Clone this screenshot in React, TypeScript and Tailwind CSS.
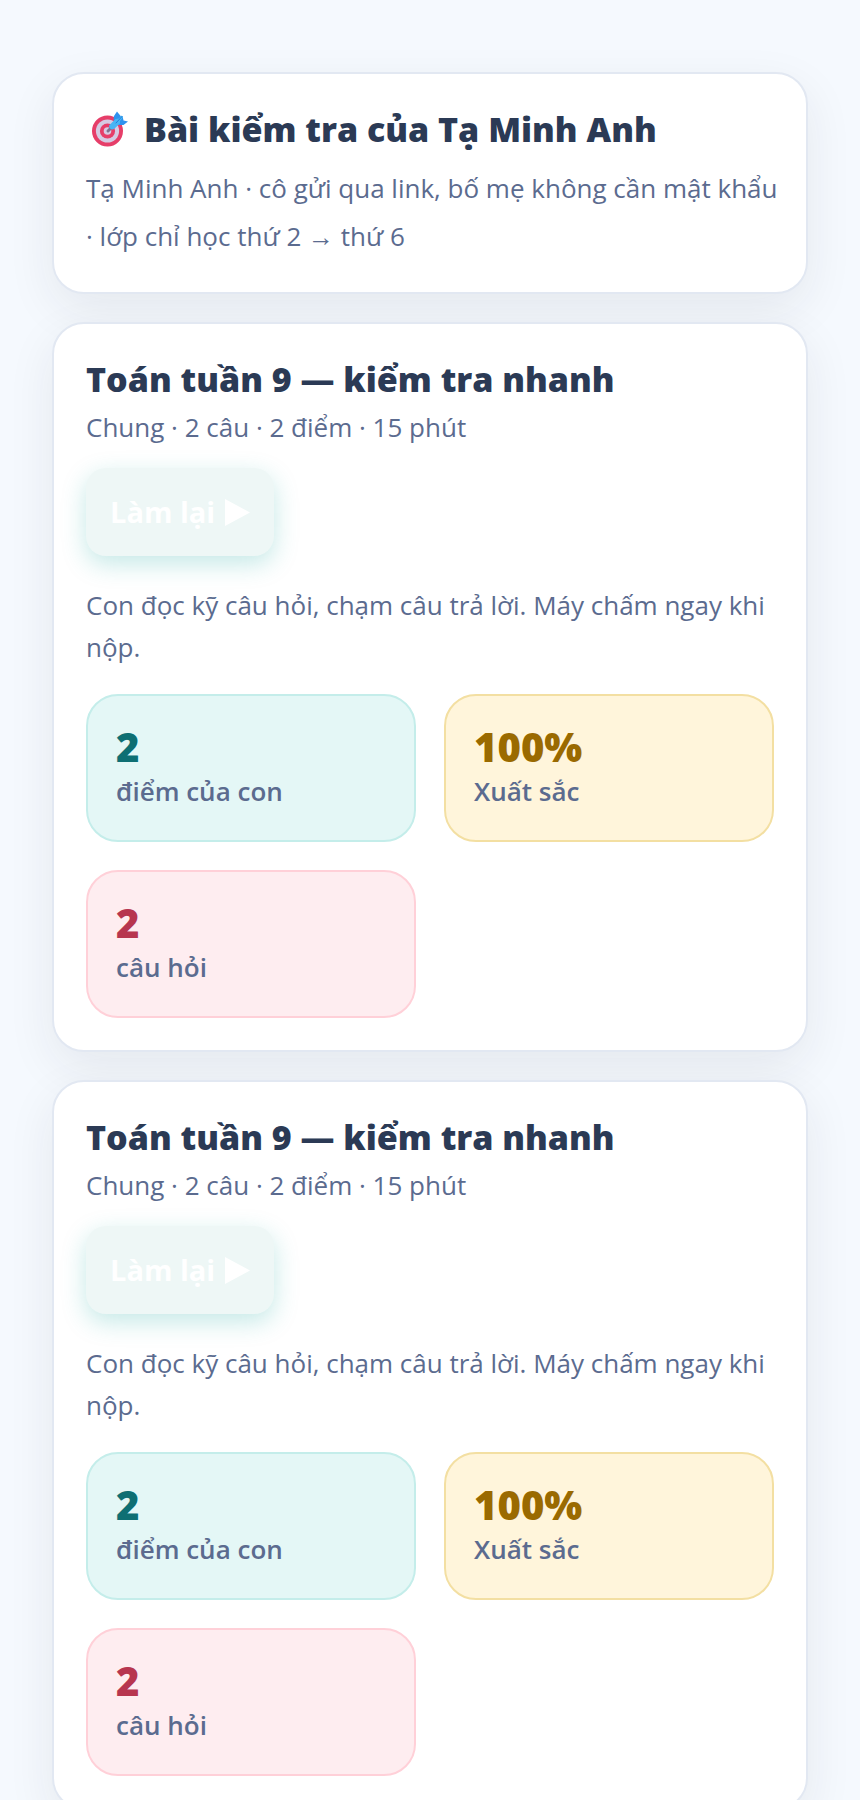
import type { ReactNode } from "react";

type Tone = "teal" | "gold" | "rose";

type Stat = {
  value: string;
  label: string;
  tone: Tone;
};

type Quiz = {
  id: string;
  title: string;
  meta: string;
  hint: string;
  stats: Stat[];
};

const stats: Stat[] = [
  { value: "2", label: "điểm của con", tone: "teal" },
  { value: "100%", label: "Xuất sắc", tone: "gold" },
  { value: "2", label: "câu hỏi", tone: "rose" },
];

const quizzes: Quiz[] = ["quiz-1", "quiz-2"].map((id) => ({
  id,
  title: "Toán tuần 9 — kiểm tra nhanh",
  meta: "Chung · 2 câu · 2 điểm · 15 phút",
  hint: "Con đọc kỹ câu hỏi, chạm câu trả lời. Máy chấm ngay khi nộp.",
  stats,
}));

const tileTones: Record<Tone, string> = {
  teal: "bg-[#e4f7f6] border-[#c4edea]",
  gold: "bg-[#fff5db] border-[#f3dfa2]",
  rose: "bg-[#feedf0] border-[#ffd0d8]",
};

const valueTones: Record<Tone, string> = {
  teal: "text-[#0e6f73]",
  gold: "text-[#9a6a00]",
  rose: "text-[#b7364f]",
};

const TargetIcon = () => (
  <svg viewBox="0 0 36 36" className="size-9 shrink-0" aria-hidden="true">
    <circle cx="15.5" cy="20" r="15.5" fill="#e63e69" />
    <circle cx="15.5" cy="20" r="11.6" fill="#d5cbe3" />
    <circle cx="15.5" cy="20" r="7.6" fill="#e63e69" />
    <circle cx="15.5" cy="20" r="3.8" fill="#d5cbe3" />
    <path d="M16 20 20 16" stroke="#80748f" strokeWidth="3" strokeLinecap="round" />
    <path d="M21.5 9.500 22 5 25 .500 29 5.500 27 11z" fill="#2f92ee" />
    <path d="M26 10 30.500 5 31.500 9.500 36 10.500 31.500 14 25.500 14z" fill="#2f92ee" />
    <path d="M17 14.500 23.500 8 27 7.500 29.500 4.500 31 6.500 28 10 28 12.500 22 18a3.400 3.400 0 0 1-5-3.500z" fill="#48b5f4" />
    <path d="m24 12 6-6.500" stroke="#217fdc" strokeWidth="1" strokeLinecap="round" />
  </svg>
);

const Card = ({ children }: { children: ReactNode }) => (
  <section className="rounded-[32px] border-2 border-[#e2e8f2] bg-white p-8 shadow-[0_16px_48px_rgba(40,44,52,0.08)]">
    {children}
  </section>
);

const StatTile = ({ value, label, tone }: Stat) => (
  <div className={`rounded-[32px] border-2 p-7 ${tileTones[tone]}`}>
    <div className={`text-[40px] leading-[46px] font-extrabold ${valueTones[tone]}`}>{value}</div>
    <div className="text-[26px] leading-[42px] font-semibold">{label}</div>
  </div>
);

const QuizCard = ({ quiz }: { quiz: Quiz }) => (
  <Card>
    <h2 className="text-[34px] leading-[46px] font-extrabold text-[#2b3a55]">{quiz.title}</h2>
    <p className="mt-1 text-[26px] leading-[42px]">{quiz.meta}</p>
    <button
      type="button"
      className="mt-5 flex h-[88px] items-center gap-2.5 rounded-[20px] bg-[#eef7f6] px-6 text-[29px] font-bold text-white shadow-[0_8px_24px_rgba(22,168,160,0.25)]"
    >
      Làm lại
      <svg viewBox="0 0 25 27" className="h-[27px] w-[25px]" aria-hidden="true">
        <path d="M0 0 25 13.500 0 27z" fill="currentColor" />
      </svg>
    </button>
    <p className="mt-7 text-[26px] leading-[42px]">{quiz.hint}</p>
    <div className="mt-[26px] grid grid-cols-2 gap-7">
      {quiz.stats.map((stat) => (
        <StatTile key={stat.label} {...stat} />
      ))}
    </div>
  </Card>
);

const App = () => {
  return (
    <main className="min-h-screen bg-[#f5f9fe] px-[52px] py-[72px] font-['Open_Sans','Noto_Sans',sans-serif] text-[#5b6b8f]">
      <div className="flex flex-col gap-7">
        <Card>
          <h1 className="flex items-center gap-4 pl-1.5 text-[34px] leading-[46px] font-extrabold text-[#2b3a55]">
            <TargetIcon />
            Bài kiểm tra của Tạ Minh Anh
          </h1>
          <p className="-mr-3 mt-3 text-[26px] leading-[48px]">
            Tạ Minh Anh · cô gửi qua link, bố mẹ không cần mật khẩu · lớp chỉ học thứ 2 → thứ 6
          </p>
        </Card>
        {quizzes.map((quiz) => (
          <QuizCard key={quiz.id} quiz={quiz} />
        ))}
      </div>
    </main>
  );
};

export default App;
